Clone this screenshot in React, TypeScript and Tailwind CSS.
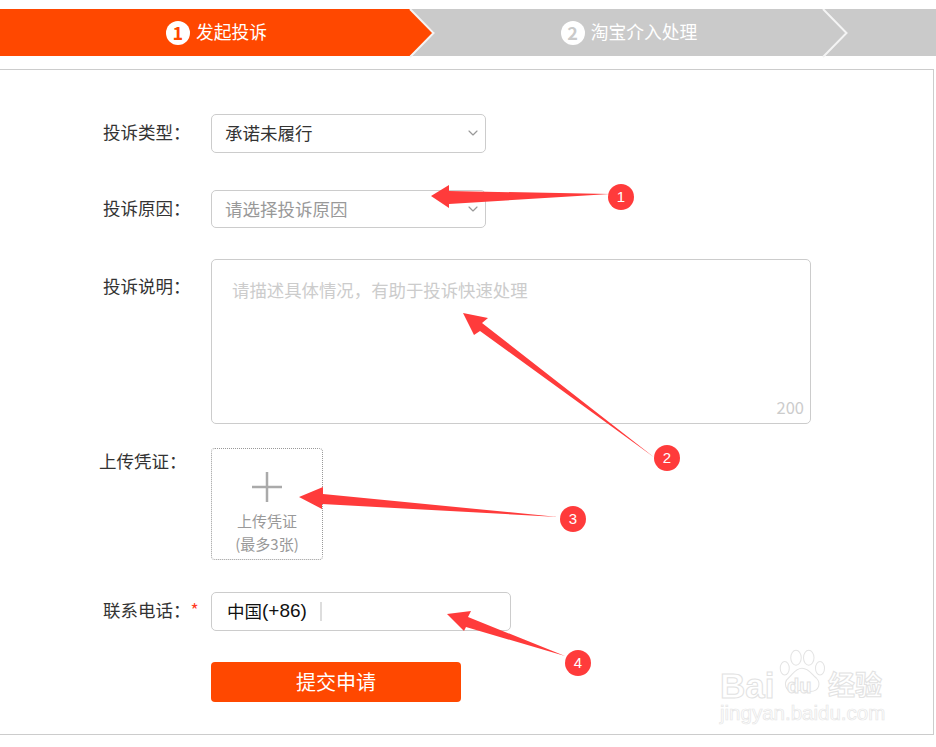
import { ChevronDown } from 'lucide-react';

const font = { fontFamily: '"Noto Sans CJK SC", "Liberation Sans", sans-serif' };

function Chevron({ x }: { x: number }) {
  return (
    <svg className="absolute top-0 h-[49px] w-[28px]" style={{ left: x }} viewBox="0 0 28 49" fill="none">
      <polyline points="1,0 24.5,24 1,48" stroke="#f4f4f4" strokeWidth="2" />
    </svg>
  );
}

function StepDot({ n, color }: { n: number; color: string }) {
  return (
    <span className={`flex h-6 w-6 items-center justify-center rounded-full bg-white text-[18px] font-bold ${color}`}>{n}</span>
  );
}

function Stepper() {
  return (
    <div className="relative mt-[9px] flex h-[47px] bg-[#cacaca] text-[17.8px] text-white">
      <div className="absolute inset-0 w-[434px] bg-[#ff4800] [clip-path:polygon(0_0,410px_0,434px_50%,410px_100%,0_100%)]" />
      <div className="relative flex w-[433px] items-center justify-center gap-[6px]">
        <StepDot n={1} color="text-[#ff4800]" />
        <span className="pb-[3px]">发起投诉</span>
      </div>
      <div className="relative flex w-[391px] items-center justify-center gap-[6px] pl-[1px]">
        <StepDot n={2} color="text-[#cacaca]" />
        <span className="pb-[3px]">淘宝介入处理</span>
      </div>
      <Chevron x={409} />
      <Chevron x={822} />
    </div>
  );
}

function Row({ label, top, children, className = '' }: { label: React.ReactNode; top?: boolean; children: React.ReactNode; className?: string }) {
  return (
    <div className={`flex ${top ? 'items-start' : 'items-center'} ${className}`}>
      <div className="flex w-[211px] shrink-0 whitespace-nowrap pl-[103px] text-[17.5px] text-[#333]">{label}</div>
      {children}
    </div>
  );
}

function SelectBox({ text, muted, h }: { text: string; muted?: boolean; h: string }) {
  return (
    <div className={`flex w-[275px] items-center justify-between rounded-[5px] border border-[#ccc] pl-[13px] pr-[4px] text-[17.5px] ${h} ${muted ? 'text-[#999]' : 'pb-[1px] text-[#333]'}`}>
      <span>{text}</span>
      <ChevronDown size={16} strokeWidth={1.75} className="text-[#999]" />
    </div>
  );
}

// red arrows and number badges laid over the form
function Annotations() {
  const badges = [
    [621, 197, 1],
    [667, 458, 2],
    [573, 519, 3],
    [578, 663, 4],
  ];
  return (
    <svg className="pointer-events-none absolute left-0 top-0 h-[747px] w-[936px]" viewBox="0 0 936 747" fill="#ff3b3b">
      <polygon points="431,196 449,185 449,191 610,194 449,204 449,208" />
      <polygon points="463,313 488,318 482,323 655,458 480,331 474,335" />
      <polygon points="299,497 323,487 323,494 558,517 322,504 322,509" />
      <polygon points="447,614 471,611 468,617 565,656 466,627 464,631" />
      {badges.map(([x, y, n]) => (
        <g key={n}>
          <circle cx={x} cy={y} r="13" />
          <text x={x} y={y + 5} textAnchor="middle" fontSize="15" fill="#fff" fontFamily="Liberation Sans, sans-serif">{n}</text>
        </g>
      ))}
    </svg>
  );
}

function Watermark() {
  return (
    <div className="pointer-events-none absolute left-[718px] top-[646px] h-[82px] w-[170px] whitespace-nowrap text-white" style={{ fontFamily: '"Liberation Sans", sans-serif' }}>
      <svg className="absolute left-[57px] top-[1px] h-[50px] w-[54px]" viewBox="0 0 72 64" fill="none" stroke="#e4e4e4" strokeWidth="1.4">
        <ellipse cx="28" cy="13" rx="7" ry="10" />
        <ellipse cx="45" cy="13" rx="7" ry="10" />
        <ellipse cx="13" cy="27" rx="6" ry="9" />
        <ellipse cx="60" cy="27" rx="6" ry="9" />
        <path d="M36 27c-9 0-12 8-18 13-7 6-5 19 8 18 5 0 7-2 10-2s6 2 11 2c13 0 14-12 8-18-6-5-10-13-19-13z" />
      </svg>
      <span className="absolute left-[2px] top-[22px] text-[35px] font-bold leading-none [-webkit-text-stroke:1px_#e2e2e2]">Bai</span>
      <span className="absolute left-[69px] top-[30px] text-[20px] font-bold leading-none [-webkit-text-stroke:1px_#e2e2e2]">du</span>
      <span className="absolute left-[110px] top-[24px] text-[27px] font-bold leading-none [-webkit-text-stroke:1px_#e2e2e2]" style={font}>经验</span>
      <span className="absolute left-[2px] top-[57px] text-[20.5px] leading-none [-webkit-text-stroke:0.7px_#e6e6e6]">jingyan.baidu.com</span>
    </div>
  );
}

export default function App() {
  return (
    <div className="relative h-[747px] w-[936px] overflow-hidden bg-white" style={font}>
      <Stepper />

      <div className="mt-[13px] flex h-[666px] w-[934px] flex-col border-y border-r border-[#ccc] pt-[44px]">
        <Row label={<span className="pb-[3px]">投诉类型：</span>}>
          <SelectBox text="承诺未履行" h="h-[39px]" />
        </Row>

        <Row label={<span className="pb-[2px]">投诉原因：</span>} className="mt-[37px]">
          <SelectBox text="请选择投诉原因" muted h="h-[38px]" />
        </Row>

        <Row label={<span className="mt-[14px]">投诉说明：</span>} top className="mt-[31px]">
          <div className="relative h-[165px] w-[600px] rounded-[5px] border border-[#ccc] px-[20px] pt-[17px] text-[17.4px] text-[#ccc]">
            请描述具体情况，有助于投诉快速处理
            <span className="absolute bottom-[3px] right-[6px] text-[16.5px]">200</span>
          </div>
        </Row>

        <Row label={<span className="-ml-[4px]">上传凭证：</span>} top className="mt-[24px]">
          <div className="flex h-[112px] w-[112px] flex-col items-center rounded-[4px] border border-dotted border-[#999] pt-[23px] text-center text-[15px] leading-[23px] text-[#999]">
            <svg className="mb-[7px] h-[30px] w-[30px]" viewBox="0 0 30 30" stroke="#aaa" strokeWidth="2.5">
              <path d="M0 15h30M15 0v30" />
            </svg>
            <span>上传凭证</span>
            <span>(最多3张)</span>
          </div>
        </Row>

        <Row
          label={
            <>
              <span className="pb-[3px]">联系电话：</span>
              <span className="text-[#ff3b1f]">*</span>
            </>
          }
          className="mt-[32px]"
        >
          <div className="flex h-[39px] w-[300px] items-center rounded-[5px] border border-[#ccc] pl-[15px] text-[17.5px] text-[#111]">
            <span className="pb-[1px]">中国</span>
            <span className="text-[19px]" style={{ fontFamily: '"Liberation Sans", sans-serif' }}>(+86)</span>
            <span className="ml-[13px] h-[19px] w-[2px] bg-[#ddd]" />
          </div>
        </Row>

        <div className="ml-[211px] mt-[31px] flex h-[40px] w-[250px] items-center justify-center rounded-[4px] bg-[#ff4800] pb-[1px] text-[20px] text-white">
          提交申请
        </div>
      </div>

      <Watermark />
      <Annotations />
    </div>
  );
}
